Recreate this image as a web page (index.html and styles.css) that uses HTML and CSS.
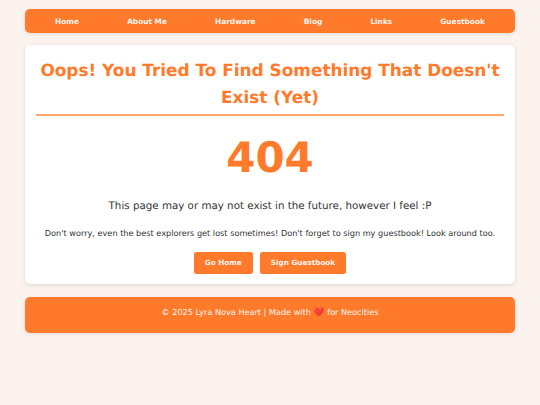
FILE: index.html
```html
<!DOCTYPE html>
<html lang="en">
<head>
<meta charset="utf-8">
<title>404</title>
<link rel="stylesheet" href="styles.css">
</head>
<body>
<div class="container">
<nav class="nav">
<a href="#">Home</a><a href="#">About Me</a><a href="#">Hardware</a><a href="#">Blog</a><a href="#">Links</a><a href="#">Guestbook</a>
</nav>
<main class="card">
<h1 class="title">Oops! You Tried To Find Something That Doesn't Exist (Yet)</h1>
<div class="code">404</div>
<p class="lead">This page may or may not exist in the future, however I feel :P</p>
<p class="note">Don't worry, even the best explorers get lost sometimes! Don't forget to sign my guestbook! Look around too.</p>
<div class="actions"><a class="btn" href="#">Go Home</a><a class="btn" href="#">Sign Guestbook</a></div>
</main>
<footer class="footer">© 2025 Lyra Nova Heart | Made with <span class="heart">❤️</span> for Neocities</footer>
</div>
</body>
</html>
```
FILE: styles.css
```css
* { box-sizing: border-box; }
html, body { margin: 0; padding: 0; }
body { background: #fdf3ee; font-family: "DejaVu Sans", sans-serif; color: #333; height: 405px; overflow: hidden; text-rendering: geometricPrecision; }
.container { width: 490px; margin: 0 auto; padding-top: 9px; }
.nav { background: #ff7b2b; border-radius: 5px; height: 24px; padding: 0 6px; display: flex; justify-content: space-around; align-items: center; box-shadow: 0 1px 4px rgba(0,0,0,.1); }
.nav a { color: #fdf3ee; font-size: 7.4px; font-weight: 700; text-decoration: none; }
.card { background: #fff; border-radius: 5px; margin-top: 12px; padding: 12px 11px; height: 239px; box-shadow: 0 1px 4px rgba(0,0,0,.12); text-align: center; }
.title { margin: 0; color: #ff7b2b; font-size: 16.9px; line-height: 27px; font-weight: 700; padding-bottom: 3px; border-bottom: 2px solid #ffa66b; }
.code { color: #ff7b2b; font-size: 42px; font-weight: 700; line-height: 50px; margin-top: 17px; }
.lead { font-size: 10.3px; line-height: 16px; margin: 15px 0 0; }
.note { font-size: 8.16px; line-height: 12px; margin: 13px 0 0; }
.actions { display: flex; justify-content: center; gap: 7px; margin-top: 13px; }
.btn { background: #ff7b2b; color: #fdf3ee; font-size: 7.25px; font-weight: 700; text-decoration: none; padding: 0 11px; height: 22px; line-height: 22px; border-radius: 2.5px; }
.footer { background: #ff7b2b; color: #fdf3ee; border-radius: 5px; margin-top: 13px; height: 36px; padding-top: 9px; text-align: center; font-size: 8.15px; line-height: 12px; box-shadow: 0 1px 4px rgba(0,0,0,.1); }
.heart { color: #e33; font-size: 9px; }
```
